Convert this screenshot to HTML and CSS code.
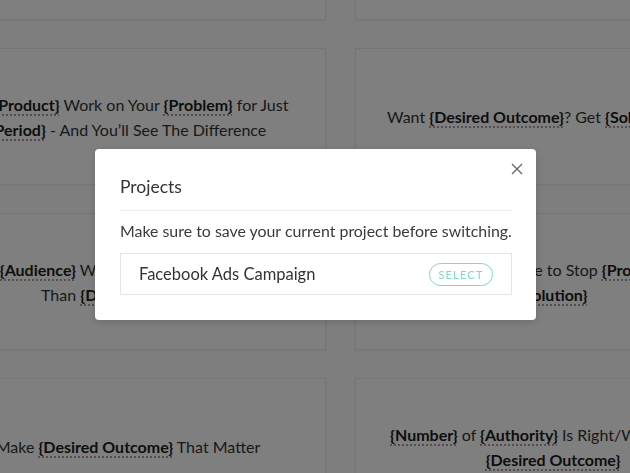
FILE: index.html
```html
<!DOCTYPE html>
<html>
<head>
<meta charset="utf-8">
<link rel="stylesheet" href="styles.css">
</head>
<body>
<div class="page">
  <div class="grid">
    <div class="card"><p>Stop {<b>Problem</b>} Forever</p></div>
    <div class="card"><p>The Secret to {<b>Desired Outcome</b>}</p></div>
    <div class="card"><p>Let <b>{Product}</b> Work on Your <b>{Problem}</b> for Just<br><b>{Period}</b> - And You’ll See The Difference</p></div>
    <div class="card"><p>Want <b>{Desired Outcome}</b>? Get <b>{Solution}</b> Today</p></div>
    <div class="card"><p><b>{Audience}</b> Who Want More <b>{Result}</b><br>Than <b>{Desired Outcome}</b></p></div>
    <div class="card"><p>It’s Finally Time to Stop <b>{Problem}</b><br><b>{Solution}</b></p></div>
    <div class="card"><p>Make <b>{Desired Outcome}</b> That Matter</p></div>
    <div class="card"><p><b>{Number}</b> of <b>{Authority}</b> Is Right/Wrong About<br><b>{Desired Outcome}</b></p></div>
  </div>
</div>
<div class="overlay"></div>
<div class="modal">
  <button class="close" aria-label="Close">
    <svg width="12" height="12" viewBox="0 0 12 12"><path d="M1 1 L11 11 M11 1 L1 11" stroke="#6a6a6a" stroke-width="1.4" fill="none"/></svg>
  </button>
  <h2 class="title">Projects</h2>
  <p class="note">Make sure to save your current project before switching.</p>
  <div class="item">
    <span class="name">Facebook Ads Campaign</span>
    <span class="select">SELECT</span>
  </div>
</div>
</body>
</html>
```
FILE: styles.css
```css
html, body {
  margin: 0;
  padding: 0;
  width: 630px;
  height: 473px;
  overflow: hidden;
  background: #fdfdfd;
  font-family: "Lato", "Noto Sans", sans-serif;
}
.page {
  width: 630px;
  height: 473px;
  overflow: hidden;
}
.grid {
  display: grid;
  grid-template-columns: 396px 396px;
  grid-auto-rows: 137px;
  column-gap: 29px;
  row-gap: 28px;
  margin-left: -70px;
  margin-top: -117px;
}
.card {
  background: #ffffff;
  border: 1px solid #eaeaea;
  box-shadow: 0 1px 2px rgba(0,0,0,0.05);
  display: flex;
  align-items: center;
  justify-content: center;
  text-align: center;
}
.card p {
  margin: 0;
  font-size: 16px;
  line-height: 25px;
  color: #333;
  white-space: nowrap;
}
.card b {
  font-weight: 700;
  color: #1c1c1c;
  text-decoration: underline dotted #a08080;
  text-underline-offset: 4px;
}
.overlay {
  position: fixed;
  inset: 0;
  background: rgba(0,0,0,0.5);
}
.modal {
  position: fixed;
  left: 95px;
  top: 149px;
  width: 392px;
  padding: 26px 24px 25px 25px;
  background: #fff;
  border-radius: 4px;
  box-shadow: 0 2px 8px rgba(0,0,0,0.15);
}
.close {
  position: absolute;
  top: 14px;
  right: 13px;
  width: 12px;
  height: 12px;
  padding: 0;
  border: 0;
  background: none;
  display: flex;
}
.title {
  margin: 0;
  font-size: 17.5px;
  font-weight: 400;
  line-height: 24px;
  color: #333;
  padding-bottom: 11px;
  border-bottom: 1px solid #ededed;
}
.note {
  margin: 9px 0 0;
  font-size: 15.9px;
  line-height: 22px;
  color: #3a3a3a;
  white-space: nowrap;
}
.item {
  margin-top: 11px;
  height: 40px;
  border: 1px solid #e4e4e4;
  display: flex;
  align-items: center;
  justify-content: space-between;
  padding: 0 18px 0 18px;
}
.name {
  font-size: 16.5px;
  color: #333;
}
.select {
  width: 62px;
  height: 21px;
  border: 1.5px solid #7ed8c9;
  border-radius: 12px;
  display: flex;
  align-items: center;
  justify-content: center;
  font-size: 11px;
  letter-spacing: 1.2px;
  color: #7ed8c9;
}
```
